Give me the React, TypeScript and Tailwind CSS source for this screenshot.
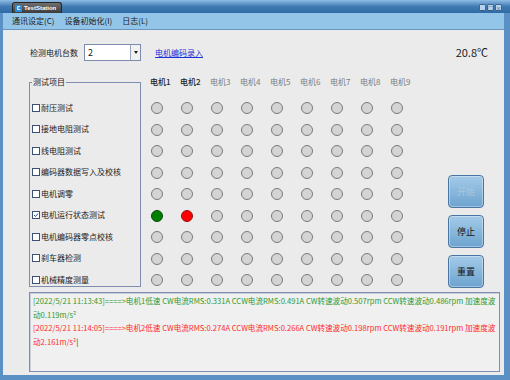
import React from 'react';

const tests = [
  '耐压测试',
  '接地电阻测试',
  '线电阻测试',
  '编码器数据写入及校核',
  '电机调零',
  '电机运行状态测试',
  '电机编码器零点校核',
  '刹车器检测',
  '机械精度测量',
];

const motors = [1, 2, 3, 4, 5, 6, 7, 8, 9];

const lamp = (row: number, col: number) => {
  if (row === 5 && col === 0) return 'bg-[#008000] border-[#0a4a0a]';
  if (row === 5 && col === 1) return 'bg-[#ff0000] border-[#9a1010]';
  return 'bg-[#d4d4d4] border-[#7a7a7a]';
};

const logs = [
  {
    color: 'text-[#2f9a2f]',
    lines: [
      '[2022/5/21 11:13:43]====>电机1低速 CW电流RMS:0.331A CCW电流RMS:0.491A CW转速波动0.507rpm CCW转速波动0.486rpm 加速度波',
      '动0.119m/s²',
    ],
  },
  {
    color: 'text-[#ff2b2b]',
    lines: [
      '[2022/5/21 11:14:05]====>电机2低速 CW电流RMS:0.274A CCW电流RMS:0.266A CW转速波动0.198rpm CCW转速波动0.191rpm 加速度波',
      '动2.161m/s²',
    ],
  },
];

const btn =
  'w-[36px] h-[33px] rounded-[4px] border border-[#4a76a3] bg-gradient-to-b from-[#a3cbe8] to-[#6da3cf] shadow-[inset_0_0_0_1px_rgba(255,255,255,0.35)] flex items-center justify-center text-[9px]';

export default function App() {
  return (
    <div className="w-[510px] h-[380px] bg-[#5a90c4] flex flex-col font-['Noto_Sans_CJK_SC',sans-serif] text-[#1a1a1a] overflow-hidden">
      {/* title bar */}
      <div className="h-[13px] bg-gradient-to-b from-[#8fbde4] via-[#3f7ab3] to-[#2f6ba6] flex items-end justify-between pl-[12px] pr-[8px]">
        <div className="h-[11px] w-[50px] rounded-t-[3px] bg-gradient-to-b from-[#707070] to-[#3c3c3c] border border-b-0 border-[#262626] flex items-center gap-[2px] pl-[2px]">
          <div className="w-[7px] h-[7px] rounded-[1px] bg-[#2c8ad6] flex items-center justify-center">
            <div className="w-[4px] h-[4px] rounded-full border border-white border-r-transparent" />
          </div>
          <span className="text-[6px] font-bold text-white leading-none font-['Liberation_Sans',sans-serif]">TestStation</span>
        </div>
        <div className="flex gap-[1px] self-center mt-[2px]">
          {['_', '□', '×'].map((g) => (
            <div
              key={g}
              className="w-[7px] h-[7px] rounded-[1px] border border-[#3f6690] bg-[#b8d4ec] text-[5px] leading-[5px] text-[#1d3c5e] flex items-center justify-center"
            >
              {g}
            </div>
          ))}
        </div>
      </div>

      <div className="flex-1 flex flex-col pl-[3px] pr-[6px] pb-[5px]">
        {/* menu */}
        <div className="h-[17px] bg-[#93c5e8] border-b border-[#6b97bf] flex items-center gap-[10px] pl-[9px] text-[8px] text-[#1a1a1a]">
          <span>通讯设定(C)</span>
          <span>设备初始化(I)</span>
          <span>日志(L)</span>
        </div>

        {/* body */}
        <div className="flex-1 bg-[#ebebeb] flex flex-col pl-[26px] pr-[4px] pb-[3px]">
          <div className="mt-[14px] h-[17px] flex items-center text-[8px]">
            <span className="ml-[1px]">检测电机台数</span>
            <div className="ml-[6px] w-[57px] h-[17px] bg-white border border-[#7b8cae] flex items-center justify-between">
              <span className="pl-[3px] text-[9px]">2</span>
              <div className="w-[10px] h-[15px] border-l border-[#9aa6bb] bg-[#f1f1f1] flex items-center justify-center">
                <div className="w-0 h-0 border-l-[2px] border-r-[2px] border-t-[3px] border-l-transparent border-r-transparent border-t-[#222]" />
              </div>
            </div>
            <span className="ml-[14px] text-[#1a2fd8] underline">电机编码录入</span>
            <span className="ml-auto mr-[12px] text-[11px]">20.8℃</span>
          </div>

          <div className="mt-[16px] flex items-start">
            {/* group box */}
            <fieldset className="w-[112px] border border-[#7f8db0] pl-[2px] pt-[15px] pb-0 h-[210px]">
              <legend className="px-[1px] text-[8px] leading-[10px]">测试项目</legend>
              <div className="flex flex-col gap-[10.5px]">
                {tests.map((t, i) => (
                  <div key={t} className="h-[11px] flex items-center gap-[1px] text-[8px] whitespace-nowrap">
                    <div className="w-[8px] h-[8px] bg-white border border-[#3c4f75] flex items-center justify-center">
                      {i === 5 && (
                        <svg width="6" height="6" viewBox="0 0 6 6">
                          <path d="M1 3 L2.5 4.5 L5 1.5" fill="none" stroke="#2d4a80" strokeWidth="1" />
                        </svg>
                      )}
                    </div>
                    <span>{t}</span>
                  </div>
                ))}
              </div>
            </fieldset>

            {/* motor grid */}
            <div className="ml-[9px] flex flex-col">
              <div className="h-[10px] flex items-center">
                {motors.map((m) => (
                  <span
                    key={m}
                    className={`w-[30px] text-[8px] leading-[10px] ${m <= 2 ? 'text-[#222] font-medium' : 'text-[#7c7c7c]'}`}
                  >
                    电机{m}
                  </span>
                ))}
              </div>
              <div className="mt-[15.5px] flex flex-col gap-[10.5px]">
                {tests.map((t, r) => (
                  <div key={t} className="h-[11px] flex items-center">
                    {motors.map((m, c) => (
                      <div key={m} className="w-[30px] flex">
                        <div className={`ml-[1px] w-[12px] h-[12px] rounded-full border ${lamp(r, c)}`} />
                      </div>
                    ))}
                  </div>
                ))}
              </div>
            </div>

            {/* buttons */}
            <div className="ml-[28px] mt-[98px] flex flex-col gap-[7px]">
              <div className={`${btn} text-[#a9c5dc]`}>开始</div>
              <div className={`${btn} text-[#111]`}>停止</div>
              <div className={`${btn} text-[#111]`}>重置</div>
            </div>
          </div>

          {/* log */}
          <div className="mt-[4px] flex-1 bg-[#f0f0f0] border border-[#7f8db0] shadow-[inset_1px_1px_0_#c9cfdc] pl-[3px] pt-[1px] text-[7.6px] leading-[13.5px] whitespace-nowrap overflow-hidden">
            {logs.map((l, i) => (
              <div key={i} className={l.color}>
                <div>{l.lines[0]}</div>
                <div>
                  {l.lines[1]}
                  {i === 1 && <span className="text-[#222]">|</span>}
                </div>
              </div>
            ))}
          </div>
        </div>
      </div>
    </div>
  );
}
